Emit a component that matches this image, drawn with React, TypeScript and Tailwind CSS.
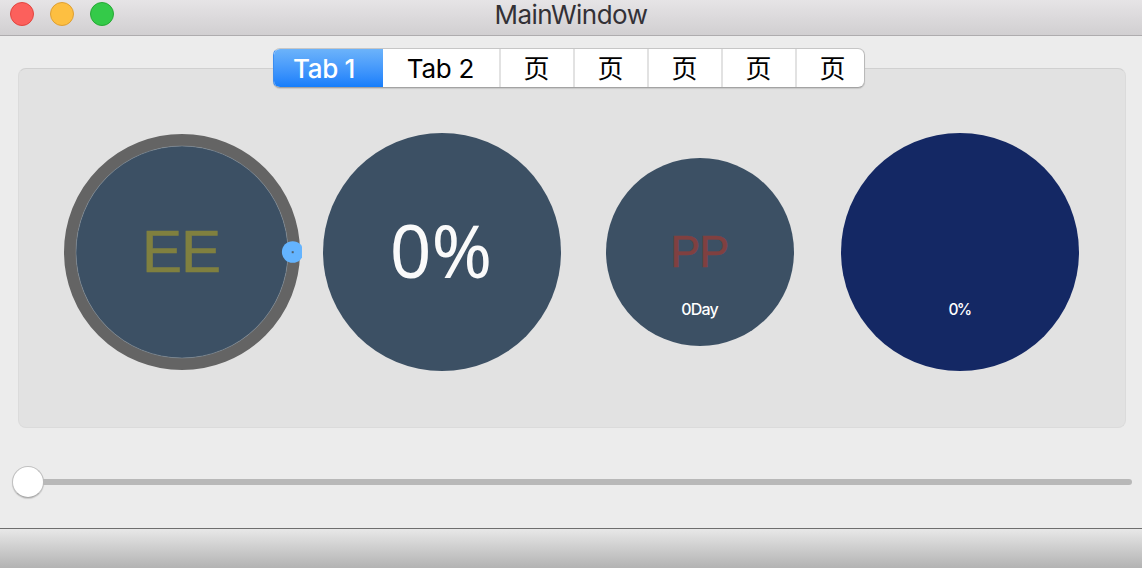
import React from "react";

const FONT = "font-['Inter','Noto_Sans_CJK_SC',sans-serif]";

const tabs = ["Tab 1", "Tab 2", "页", "页", "页", "页", "页"];

function TitleBar() {
  return (
    <header className="grid h-9 shrink-0 grid-cols-[1fr_auto_1fr] items-start border-b border-[#aeacae] bg-linear-to-b from-[#e6e4e6] to-[#d1cfd1]">
      <div className="flex gap-4 pt-0.5 pl-2.5">
        <span className="size-6 rounded-full border border-[#e2453f] bg-[#fc605c]" />
        <span className="size-6 rounded-full border border-[#de9f33] bg-[#fdbf41]" />
        <span className="size-6 rounded-full border border-[#27a935] bg-[#34ca49]" />
      </div>
      <h1 className="text-[26px] leading-[30px] tracking-[-0.5px] text-[#333136]">MainWindow</h1>
      <span />
    </header>
  );
}

function TabBar() {
  return (
    <div className="ml-[254px] -mt-[21px] flex h-10 w-[592px] shrink-0 overflow-hidden rounded-[7px] border border-t-[#c6c6c6] border-r-[#b9b9b9] border-b-[#a3a3a3] border-l-[#3c8df0] bg-white shadow-[0_1px_1px_rgba(0,0,0,0.12)]">
      {tabs.map((label, i) => {
        if (i === 0)
          return (
            <button key={i} className="-mt-px -mb-px -ml-px flex h-10 w-[110px] shrink-0 items-center justify-center border-t border-b border-t-[#4c9ff0] border-b-[#0d63ea] bg-linear-to-b from-[#6cb3fa] to-[#157efb] pr-2 text-[26px] font-[450] tracking-[-0.3px] text-white">
              {label}
            </button>
          );
        if (i === 1)
          return (
            <button key={i} className="flex w-[118px] shrink-0 items-center justify-center border-r-2 border-[#e2e2e2] pr-px text-[26px] tracking-[-0.2px] text-black">
              {label}
            </button>
          );
        return (
          <button key={i} className="flex w-[74px] shrink-0 items-center justify-center border-r-2 border-[#e2e2e2] pr-px text-[26px] text-black last:border-r-0 last:pr-[3px]">
            {label}
          </button>
        );
      })}
    </div>
  );
}

function Gauges() {
  return (
    <div className="flex pt-[44px] pl-[43px]">
      <svg className="mr-5 size-60" viewBox="0 0 240 240">
        <circle cx="120" cy="120" r="112" fill="none" stroke="#646464" strokeWidth="12" />
        <circle cx="120" cy="120" r="106" fill="#3c5064" stroke="#8b949c" strokeWidth="0.5" />
        <text x="119" y="140" textAnchor="middle" fontSize="60" className="font-['Liberation_Sans',sans-serif]" letterSpacing="-1" fill="#80803f" stroke="#80803f" strokeWidth="0.6">EE</text>
        <circle cx="230.7" cy="120" r="10.8" fill="#64b4ff" />
        <rect x="229.7" y="119.2" width="2" height="2" fill="#50606e" />
      </svg>
      <svg className="mr-[18px] size-60" viewBox="0 0 240 240">
        <circle cx="120" cy="120" r="119" fill="#3c5064" />
        <text x="119" y="145.5" textAnchor="middle" fontSize="73" className="font-['Noto_Sans',sans-serif]" fill="#fafafa">0%</text>
      </svg>
      <svg className="mr-5 size-60" viewBox="0 0 240 240">
        <circle cx="120" cy="120" r="94" fill="#3c5064" />
        <text x="119.3" y="135" textAnchor="middle" fontSize="45" className="font-['Liberation_Sans',sans-serif]" letterSpacing="-1" fill="#804040" stroke="#804040" strokeWidth="0.5">PP</text>
        <text x="119.5" y="183" textAnchor="middle" fontSize="16" fontWeight="500" letterSpacing="-0.8" fill="#ffffff">0Day</text>
      </svg>
      <svg className="size-60" viewBox="0 0 240 240">
        <circle cx="120" cy="120" r="119" fill="#142864" />
        <text x="119.5" y="183" textAnchor="middle" fontSize="15.5" fontWeight="500" letterSpacing="-1.6" fill="#ffffff">0%</text>
      </svg>
    </div>
  );
}

function Slider() {
  return (
    <div className="mt-[38px] mr-2.5 ml-3 flex h-8 shrink-0 items-center">
      <span className="size-8 shrink-0 rounded-full border border-[#c0c0c0] border-b-[#a9a9a9] bg-white shadow-[0_1px_1px_rgba(0,0,0,0.15)]" />
      <span className="-ml-px h-1.5 flex-1 rounded-r-full bg-[#b8b8b8]" />
    </div>
  );
}

export default function App() {
  return (
    <div className={`flex h-[568px] w-[1142px] flex-col overflow-hidden bg-[#ececec] ${FONT}`}>
      <TitleBar />
      <main className="mx-4 mt-8 ml-[18px] flex h-[360px] shrink-0 flex-col rounded-lg border border-[#dbdbdb] border-t-[#d0d0d0] bg-[#e2e2e2]">
        <TabBar />
        <Gauges />
      </main>
      <Slider />
      <footer className="mt-[30px] h-10 shrink-0 border-t border-[#6e6e6e] bg-linear-to-b from-[#e8e8e8] to-[#b3b3b3]" />
    </div>
  );
}
